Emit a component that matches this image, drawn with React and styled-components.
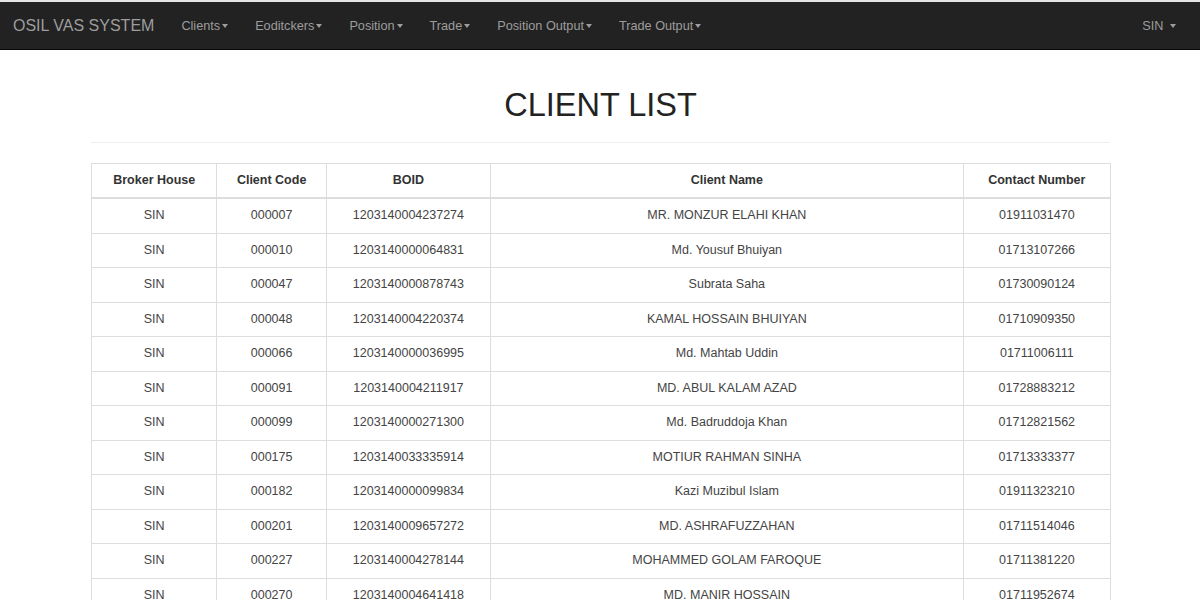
import React from "react";
import styled, { createGlobalStyle } from "styled-components";

const GlobalStyle = createGlobalStyle`
  html, body {
    margin: 0;
    padding: 0;
    background: #fff;
    font-family: "Liberation Sans", Arial, sans-serif;
    color: #333;
  }
  body {
    border-top: 2px solid #e6e6e6;
  }
`;

const Navbar = styled.nav`
  display: flex;
  align-items: center;
  height: 47px;
  background-color: #222;
  border-bottom: 1px solid #080808;
  padding: 0 11px 0 13px;
`;

const Brand = styled.a`
  font-size: 16px;
  color: #9d9d9d;
  margin-right: 13.5px;
  white-space: nowrap;
`;

const NavList = styled.ul`
  display: flex;
  list-style: none;
  margin: 0;
  padding: 0;
  flex: ${(p) => (p.$right ? "0 0 auto" : "1 1 auto")};
`;

const NavItem = styled.li`
  padding: 0 13.5px;
  font-size: 12.7px;
  color: #9d9d9d;
  white-space: nowrap;
  display: flex;
  align-items: center;
`;

const Caret = styled.span`
  display: inline-block;
  width: 0;
  height: 0;
  margin-left: ${(p) => (p.$wide ? "6px" : "2px")};
  border-top: 4px solid #9d9d9d;
  border-left: 3.5px solid transparent;
  border-right: 3.5px solid transparent;
`;

const Container = styled.main`
  width: 1019px;
  margin: 0 auto;
  padding-left: 1px;
`;

const Title = styled.h1`
  margin: 37px 0 0;
  text-align: center;
  font-size: 32.5px;
  font-weight: normal;
  line-height: 36px;
  color: #222;
`;

const Rule = styled.hr`
  margin: 19px 0 20px;
  border: 0;
  border-top: 1px solid #eee;
`;

const Table = styled.table`
  width: 1020px;
  table-layout: fixed;
  border-collapse: collapse;
  border: 1px solid #ddd;
  font-size: 12.5px;
`;

const Th = styled.th`
  width: ${(p) => ((p.$w / 1019) * 100).toFixed(2)}%;
  padding: 7px 0;
  line-height: 19px;
  border: 1px solid #ddd;
  border-bottom: 2px solid #ddd;
  font-weight: bold;
  color: #333;
  text-align: center;
`;

const Td = styled.td`
  padding: 7px 0;
  line-height: 19.5px;
  border: 1px solid #ddd;
  color: #444;
  text-align: center;
`;

const menus = ["Clients", "Eoditckers", "Position", "Trade", "Position Output", "Trade Output"];

const columns = [
  { label: "Broker House", w: 125 },
  { label: "Client Code", w: 109 },
  { label: "BOID", w: 164 },
  { label: "Client Name", w: 474 },
  { label: "Contact Number", w: 147 },
];

const clients = [
  ["000007", "1203140004237274", "MR. MONZUR ELAHI KHAN", "01911031470"],
  ["000010", "1203140000064831", "Md. Yousuf Bhuiyan", "01713107266"],
  ["000047", "1203140000878743", "Subrata Saha", "01730090124"],
  ["000048", "1203140004220374", "KAMAL HOSSAIN BHUIYAN", "01710909350"],
  ["000066", "1203140000036995", "Md. Mahtab Uddin", "01711006111"],
  ["000091", "1203140004211917", "MD. ABUL KALAM AZAD", "01728883212"],
  ["000099", "1203140000271300", "Md. Badruddoja Khan", "01712821562"],
  ["000175", "1203140033335914", "MOTIUR RAHMAN SINHA", "01713333377"],
  ["000182", "1203140000099834", "Kazi Muzibul Islam", "01911323210"],
  ["000201", "1203140009657272", "MD. ASHRAFUZZAHAN", "01711514046"],
  ["000227", "1203140004278144", "MOHAMMED GOLAM FAROQUE", "01711381220"],
  ["000270", "1203140004641418", "MD. MANIR HOSSAIN", "01711952674"],
];

const App = () => (
  <>
    <GlobalStyle />
    <Navbar>
      <Brand>OSIL VAS SYSTEM</Brand>
      <NavList>
        {menus.map((m) => (
          <NavItem key={m}>
            {m}
            <Caret />
          </NavItem>
        ))}
      </NavList>
      <NavList $right>
        <NavItem>
          SIN
          <Caret $wide />
        </NavItem>
      </NavList>
    </Navbar>
    <Container>
      <Title>CLIENT LIST</Title>
      <Rule />
      <Table>
        <thead>
          <tr>
            {columns.map((c) => (
              <Th key={c.label} $w={c.w}>
                {c.label}
              </Th>
            ))}
          </tr>
        </thead>
        <tbody>
          {clients.map((row) => (
            <tr key={row[0]}>
              <Td>SIN</Td>
              {row.map((cell) => (
                <Td key={cell}>{cell}</Td>
              ))}
            </tr>
          ))}
        </tbody>
      </Table>
    </Container>
  </>
);

export default App;
